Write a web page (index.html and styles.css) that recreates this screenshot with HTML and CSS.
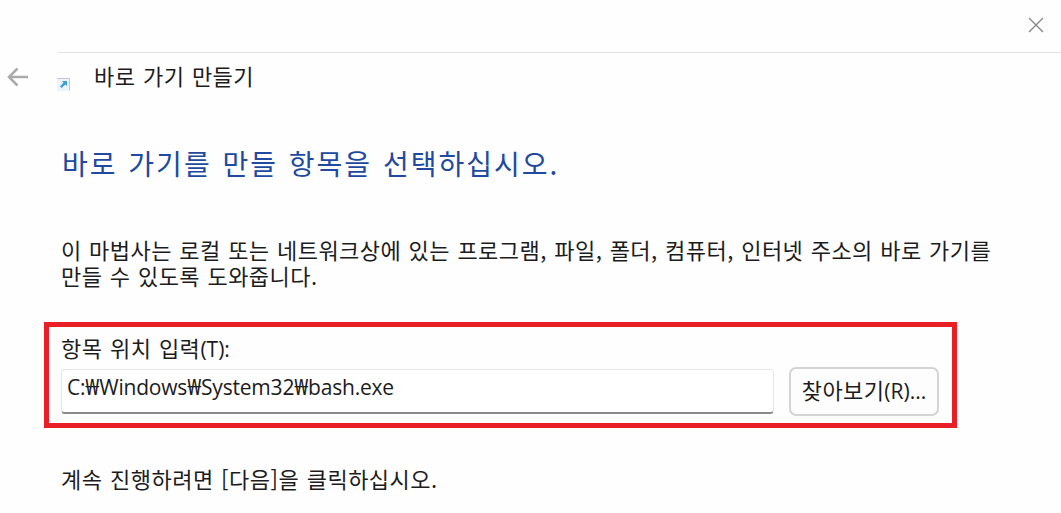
FILE: index.html
```html
<!DOCTYPE html>
<html lang="ko">
<head>
    <meta charset="UTF-8">
    <meta name="viewport" content="width=device-width, initial-scale=1.0">
    <title>바로 가기 만들기</title>
    <link rel="stylesheet" href="styles.css">
</head>
<body>
    <div class="wizard">
        <div class="title-bar">
            <button type="button" class="close-button" aria-label="닫기">
                <svg width="16" height="16" viewBox="0 0 16 16"><path d="M1 1L15 15M15 1L1 15"/></svg>
            </button>
        </div>

        <header class="wizard-header">
            <button type="button" class="back-button" aria-label="뒤로">
                <svg width="22" height="20" viewBox="0 0 22 20"><path d="M10.5 1.5L2 10L10.5 18.5M2 10H21"/></svg>
            </button>
            <svg class="shortcut-icon" width="13" height="13" viewBox="0 0 13 13">
                <rect width="13" height="13" fill="#eef3f9"/>
                <path d="M0 0.5H12.5V12.5" fill="none" stroke="#c4c6d0"/>
                <path d="M5 3H10V8L8.400 6.400L4.600 10L3 8.400L6.600 4.600Z" fill="#3f9fd8"/>
            </svg>
            <span class="wizard-name">바로 가기 만들기</span>
        </header>

        <main class="wizard-body">
            <h1>바로 가기를 만들 항목을 선택하십시오.</h1>
            <p class="description">이 마법사는 로컬 또는 네트워크상에 있는 프로그램, 파일, 폴더, 컴퓨터, 인터넷 주소의 바로 가기를<br>만들 수 있도록 도와줍니다.</p>

            <div class="location-box">
                <label for="location">항목 위치 입력<span class="latin">(T):</span></label>
                <div class="location-row">
                    <input type="text" id="location" value="C:₩Windows₩System32₩bash.exe">
                    <button type="button" class="browse-button">찾아보기<span class="latin">(R)...</span></button>
                </div>
            </div>

            <p class="hint">계속 진행하려면 [다음]을 클릭하십시오.</p>
        </main>
    </div>
</body>
</html>
```
FILE: styles.css
```css
* {
    box-sizing: border-box;
}

body {
    margin: 0;
    background-color: #fefefe;
    color: #1c1c1c;
    font-family: "Noto Sans CJK KR", sans-serif;
    font-size: 22px;
    letter-spacing: 0.5px;
    word-spacing: 0.8px;
    overflow: hidden;
}

button {
    padding: 0;
    border: none;
    background: none;
    font-family: inherit;
}

svg {
    display: block;
}

h1, p {
    margin: 0;
    white-space: nowrap;
}

.wizard {
    height: 513px;
}

.title-bar {
    display: flex;
    justify-content: flex-end;
    height: 53px;
    margin-left: 58px;
    padding: 17px 17px 0 0;
    border-bottom: 1px solid #e3e3e3;
}

.close-button {
    height: 16px;
}

.close-button path {
    fill: none;
    stroke: #858585;
    stroke-width: 1.3;
}

.wizard-header {
    display: flex;
    align-items: flex-start;
    height: 86px;
    padding-left: 7px;
}

.back-button {
    margin-top: 14px;
}

.back-button path {
    fill: none;
    stroke: #aaa;
    stroke-width: 2.5;
}

.shortcut-icon {
    margin: 25px 0 0 28px;
}

.wizard-name {
    margin: 7px 0 0 24px;
    line-height: 30px;
}

.wizard-body {
    padding-left: 61px;
}

h1 {
    height: 97px;
    padding-left: 1px;
    color: #2149a0;
    font-size: 28px;
    font-weight: 400;
    line-height: 48px;
    letter-spacing: 2px;
    word-spacing: 1px;
}

.description {
    height: 86px;
    line-height: 26px;
    letter-spacing: 0.46px;
}

.location-box {
    width: 913px;
    height: 106px;
    margin-left: -17px;
    padding: 5px 13px 0 12px;
    border: 5px solid #e81f27;
}

.location-box label {
    display: block;
    height: 35px;
    line-height: 30px;
}

.latin {
    font-family: "Open Sans", "Noto Sans", sans-serif;
    font-size: 21px;
    letter-spacing: 0;
}

.location-row {
    display: flex;
    gap: 15px;
}

.location-row input {
    width: 713px;
    height: 45px;
    margin-top: 2px;
    padding: 0 6px 8px 5px;
    border: 1px solid #e6e6e6;
    border-bottom: 2px solid #8a8a8a;
    border-radius: 4px;
    background-color: #fff;
    color: inherit;
    font-family: "Open Sans", "Noto Sans", "Noto Sans CJK KR", sans-serif;
    font-size: 21px;
    letter-spacing: -0.2px;
    outline: none;
}

.browse-button {
    width: 150px;
    height: 49px;
    padding-bottom: 5px;
    border: 2px solid #d4d4d4;
    border-radius: 7px;
    background-color: #fdfdfd;
    color: inherit;
    font-size: 22px;
    letter-spacing: 0.4px;
    white-space: nowrap;
}

.hint {
    padding-top: 35px;
    line-height: 30px;
}
```
